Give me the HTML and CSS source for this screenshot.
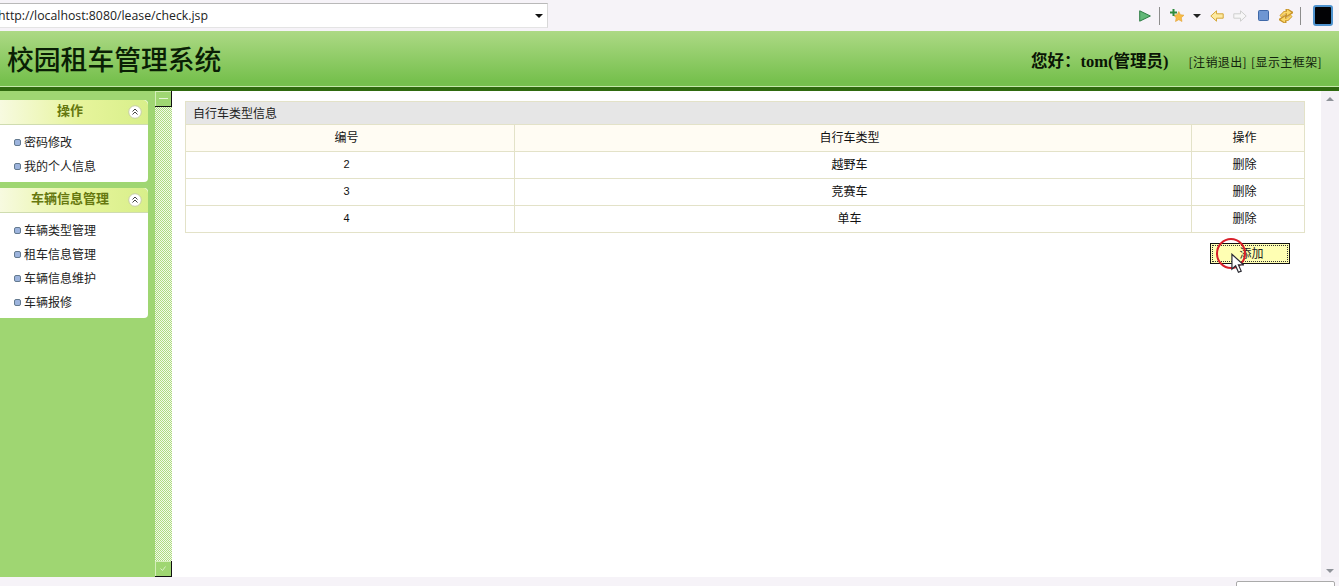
FILE: index.html
```html
<!DOCTYPE html>
<html lang="zh-CN">
<head>
<meta charset="utf-8">
<title>校园租车管理系统</title>
<link rel="stylesheet" href="styles.css">
</head>
<body>
<div class="page">
  <div class="browserbar">
    <div class="urlbox">
      <div class="urlclip"><span class="urltext">http://localhost:8080/lease/check.jsp</span></div>
      <span class="urlarrow"></span>
    </div>
    <div class="tools">
      <svg class="ic ic-play" viewBox="0 0 12 12"><path d="M.7.8 11.400 6 .7 11.200Z" fill="#62b878" stroke="#2f7d46"/></svg>
      <span class="sep sep-a"></span>
      <svg class="ic ic-star" viewBox="0 0 15 14"><path d="M8.800 2.500l1.500 3.200 3.700.5-2.700 2.500.7 3.800-3.200-1.800-3.300 1.800.7-3.800-2.700-2.500 3.700-.5Z" fill="#f8bc45" stroke="#e0a030" stroke-width=".6"/><path d="M3.500 0v7M0 3.500h7" stroke="#2e8b3e" stroke-width="2"/></svg>
      <span class="caret"></span>
      <svg class="ic ic-arrow" viewBox="0 0 14 12"><path d="M.8 6 6.500.8v3h6.700v4.400H6.500v3Z" fill="#fdeaa0" stroke="#d4a63a"/></svg>
      <svg class="ic ic-arrow2" viewBox="0 0 14 12"><path d="M13.200 6 7.500.8v3H.8v4.400h6.700v3Z" fill="#f7f6f7" stroke="#cfcfcf"/></svg>
      <svg class="ic ic-stop" viewBox="0 0 11 11"><rect x=".5" y=".5" width="10" height="10" rx="1" fill="#6e96d2" stroke="#3f68a8"/></svg>
      <svg class="ic ic-sync" viewBox="0 0 14 14"><path d="M1.500 7.500 5.500 3.500H8M8 .8 12.200 3.500 8 6.200Z" fill="none" stroke="#c8952c" stroke-width="3"/><path d="M12.500 6.500 8.500 10.500H6M6 13.200 1.800 10.500 6 7.800Z" fill="none" stroke="#c8952c" stroke-width="3"/><path d="M1.500 7.500 5.500 3.500H8M8.800 2 11 3.500 8.800 5Z" fill="#fbd76a" stroke="#fbd76a" stroke-width="1.600"/><path d="M12.500 6.500 8.500 10.500H6M5.200 12 3 10.500 5.200 9Z" fill="#fbd76a" stroke="#fbd76a" stroke-width="1.600"/></svg>
      <span class="sep sep-b"></span>
      <span class="blackbox"></span>
    </div>
  </div>

  <header class="banner">
    <h1 class="title">校园租车管理系统</h1>
    <div class="userinfo">
      <span class="hello">您好：tom(管理员)</span>
      <span class="links"><a class="lnk">[注销退出]</a><a class="lnk">[显示主框架]</a></span>
    </div>
  </header>

  <div class="workspace">
    <aside class="sidebar">
      <section class="panel">
        <h2 class="panelhead"><span class="panelname">操作</span><svg class="fold" viewBox="0 0 14 14"><circle cx="7" cy="7" r="6.300" fill="#fff" stroke="#c6cda4"/><path d="M4.500 6.500 7 4l2.500 2.500M4.500 9.500 7 7l2.500 2.500" fill="none" stroke="#444" stroke-width="1"/></svg></h2>
        <ul class="menu">
          <li class="menuitem">密码修改</li>
          <li class="menuitem">我的个人信息</li>
        </ul>
      </section>
      <section class="panel">
        <h2 class="panelhead"><span class="panelname">车辆信息管理</span><svg class="fold" viewBox="0 0 14 14"><circle cx="7" cy="7" r="6.300" fill="#fff" stroke="#c6cda4"/><path d="M4.500 6.500 7 4l2.500 2.500M4.500 9.500 7 7l2.500 2.500" fill="none" stroke="#444" stroke-width="1"/></svg></h2>
        <ul class="menu">
          <li class="menuitem">车辆类型管理</li>
          <li class="menuitem">租车信息管理</li>
          <li class="menuitem">车辆信息维护</li>
          <li class="menuitem">车辆报修</li>
        </ul>
      </section>
    </aside>
    <div class="splitter">
      <span class="splitbtn"><span class="minus"></span></span>
      <span class="splitbtn"><svg class="tick" viewBox="0 0 6 5"><path d="M.5 2.500 2.500 4.500 5.500.5" fill="none" stroke="#d9f0c4" stroke-width="1"/></svg></span>
    </div>
    <main class="content">
      <table class="grid">
        <caption class="gridcap">自行车类型信息</caption>
        <thead>
          <tr class="headrow"><th class="col1">编号</th><th class="col2">自行车类型</th><th class="col3">操作</th></tr>
        </thead>
        <tbody>
          <tr><td class="num">2</td><td>越野车</td><td>删除</td></tr>
          <tr><td class="num">3</td><td>竞赛车</td><td>删除</td></tr>
          <tr><td class="num">4</td><td>单车</td><td>删除</td></tr>
        </tbody>
      </table>
      <div class="actions">
        <button class="addbtn" type="button"><span class="addinner">添加</span></button>
        <span class="clickring"></span>
        <svg class="cursor" viewBox="0 0 14 22"><path d="M1 1v16l4-3.500 3 7 3-1.300-3-6.700h5.500Z" fill="#fff" stroke="#2b2b33" stroke-width="1.300"/></svg>
      </div>
    </main>
    <div class="scrollbar"><span class="sarrow sarrow-up"></span><span class="sarrow sarrow-down"></span></div>
  </div>
  <footer class="bottomstrip"><span class="statusbox"></span></footer>
</div>
</body>
</html>
```
FILE: styles.css
```css
* { box-sizing: border-box; }
html, body { margin: 0; padding: 0; height: 100%; overflow: hidden; }
body { font-family: "Noto Sans CJK SC", "Liberation Sans", sans-serif; font-size: 12px; color: #111; }
.page { width: 1339px; height: 586px; display: flex; flex-direction: column; background: #f6f3f8; }

.browserbar { height: 31px; flex: none; display: flex; justify-content: space-between; align-items: flex-start; padding-top: 3px; }
.urlbox { width: 548px; height: 25px; background: #fff; border-top: 1px solid #b9b9b9; border-right: 1px solid #d8d8d8; border-bottom: 1px solid #e4e4e4; display: flex; align-items: center; justify-content: space-between; padding-right: 4px; }
.urlclip { display: flex; margin-left: -2px; }
.urltext { font-family: "Open Sans", "Liberation Sans", sans-serif; font-size: 12.300px; color: #222; white-space: nowrap; }
.urlarrow { width: 0; height: 0; border: 4px solid transparent; border-top: 4px solid #111; border-bottom: 0; }
.tools { display: flex; align-items: center; height: 25px; padding-right: 6px; }
.ic { display: block; flex: none; }
.ic-play { width: 12px; height: 12px; }
.sep { width: 1px; height: 18px; background: #8d8d8d; }
.sep-a { margin-left: 8px; }
.ic-star { width: 15px; height: 14px; margin-left: 10px; }
.caret { width: 0; height: 0; border: 4px solid transparent; border-top: 4px solid #222; border-bottom: 0; margin-left: 8px; }
.ic-arrow { width: 14px; height: 12px; margin-left: 9px; }
.ic-arrow2 { width: 14px; height: 12px; margin-left: 9px; }
.ic-stop { width: 11px; height: 11px; margin-left: 11px; }
.ic-sync { width: 14px; height: 14px; margin-left: 10px; }
.sep-b { margin-left: 7px; }
.blackbox { width: 20px; height: 21px; margin-left: 12px; background: #020205; border: 2px solid #4f93cf; border-radius: 3px; }

.banner { height: 60px; flex: none; display: flex; justify-content: space-between; align-items: flex-start; padding: 0 17px 0 7px; background: linear-gradient(#add985, #76c04d 90%); border-bottom: 4px solid #2f6a0e; box-shadow: inset 0 -1px 0 #c4e8a8; }
.title { margin: 11px 0 0; font-family: "Noto Sans CJK SC", serif; font-size: 26.800px; line-height: 34px; font-weight: 500; color: #0a1f05; }
.userinfo { display: flex; align-items: center; margin-top: 20px; height: 20px; }
.hello { font-family: "Liberation Serif", "Noto Sans CJK SC", serif; font-size: 16.500px; font-weight: 700; color: #0a1505; margin-right: 20px; position: relative; top: -1px; }
.links { display: flex; gap: 4px; font-size: 12px; letter-spacing: 0.4px; color: #12240c; }
.lnk { white-space: nowrap; }

.workspace { flex: 1; min-height: 0; display: flex; }
.sidebar { width: 155px; flex: none; background: #9fd672; padding: 9px 7px 0 0; display: flex; flex-direction: column; gap: 6px; }
.panel { background: #fff; border-radius: 0 4px 4px 0; }
.panelhead { position: relative; height: 25px; margin: 0; background: linear-gradient(90deg, #f7fae0 0%, #e6f49b 55%, #d8ef8a 100%); border-bottom: 1px solid #cfdcb0; border-radius: 0 5px 0 0; display: flex; align-items: flex-start; justify-content: center; padding-right: 8px; }
.panelname { font-size: 13px; font-weight: 700; color: #66780f; line-height: 20px; }
.fold { position: absolute; right: 6px; top: 5px; width: 14px; height: 14px; }
.menu { list-style: none; margin: 0; padding: 5px 0 4px; }
.menuitem { height: 24px; line-height: 24px; padding-left: 24px; position: relative; font-size: 12px; color: #222; white-space: nowrap; }
.menuitem::before { content: ""; position: absolute; left: 14px; top: 9px; width: 5px; height: 5px; background: #9db4dd; border: 1px solid #647a8f; border-radius: 2px; }

.splitter { width: 17px; flex: none; display: flex; flex-direction: column; justify-content: space-between; background-color: #f2faea; background-image: url("data:image/svg+xml,%3Csvg xmlns='http://www.w3.org/2000/svg' width='2' height='2' shape-rendering='crispEdges'%3E%3Crect width='1' height='1' fill='%23aedb80'/%3E%3Crect x='1' y='1' width='1' height='1' fill='%23aedb80'/%3E%3C/svg%3E"); background-size: 2px 2px; }
.splitbtn { height: 16px; background: #9fd672; border-right: 1px solid #111; border-bottom: 1px solid #111; box-shadow: inset 1px 1px 0 #d5efba; display: flex; align-items: center; justify-content: center; }
.minus { width: 9px; height: 1px; background: #e6f6d6; }
.tick { width: 6px; height: 5px; }

.content { flex: 1; min-width: 0; background: #fff; padding: 10px 16px 0 13px; }
.grid { width: 1120px; table-layout: fixed; border-collapse: collapse; font-size: 12px; color: #111; }
.gridcap { height: 23px; line-height: 21px; text-align: left; padding-left: 7px; background: #e6e6e6; border: 1px solid #e3e2c8; border-bottom: 0; font-size: 12px; color: #222; }
.grid th, .grid td { border: 1px solid #e3e2c8; height: 27px; padding: 0 7px 4px 0; text-align: center; font-weight: 400; }
.grid th { background: #fffcf3; }
.grid .num { font-family: "Liberation Sans", sans-serif; font-size: 11px; padding-bottom: 3px; }
.col1 { width: 329px; }
.col3 { width: 113px; }

.actions { position: relative; display: flex; justify-content: flex-end; padding: 10px 15px 0 0; }
.addbtn { width: 80px; height: 21px; padding: 1px; background: #ffffb3; border: 1px solid #111; font-family: inherit; font-size: 12px; color: #222; display: flex; }
.addinner { flex: 1; border: 1px dotted #333; display: flex; align-items: center; justify-content: center; line-height: 14px; padding: 0 0 2px 3px; }
.clickring { position: absolute; left: 1031px; top: 5px; width: 30px; height: 31px; border: 2px solid #d9202a; border-radius: 50%; }
.cursor { position: absolute; left: 1046px; top: 20px; width: 13px; height: 21px; }

.scrollbar { width: 18px; flex: none; background: #f4f1f6; display: flex; flex-direction: column; justify-content: space-between; align-items: center; padding: 6px 0 4px; }
.sarrow { width: 0; height: 0; border-left: 4px solid transparent; border-right: 4px solid transparent; }
.sarrow-up { border-bottom: 4px solid #8f9399; }
.sarrow-down { border-top: 4px solid #8f9399; }

.bottomstrip { height: 9px; flex: none; background: #f6f3f8; display: flex; justify-content: flex-end; padding: 4px 4px 0 0; overflow: hidden; }
.statusbox { width: 99px; height: 10px; background: #fff; border: 1px solid #aaa; border-radius: 2px 2px 0 0; }
```
